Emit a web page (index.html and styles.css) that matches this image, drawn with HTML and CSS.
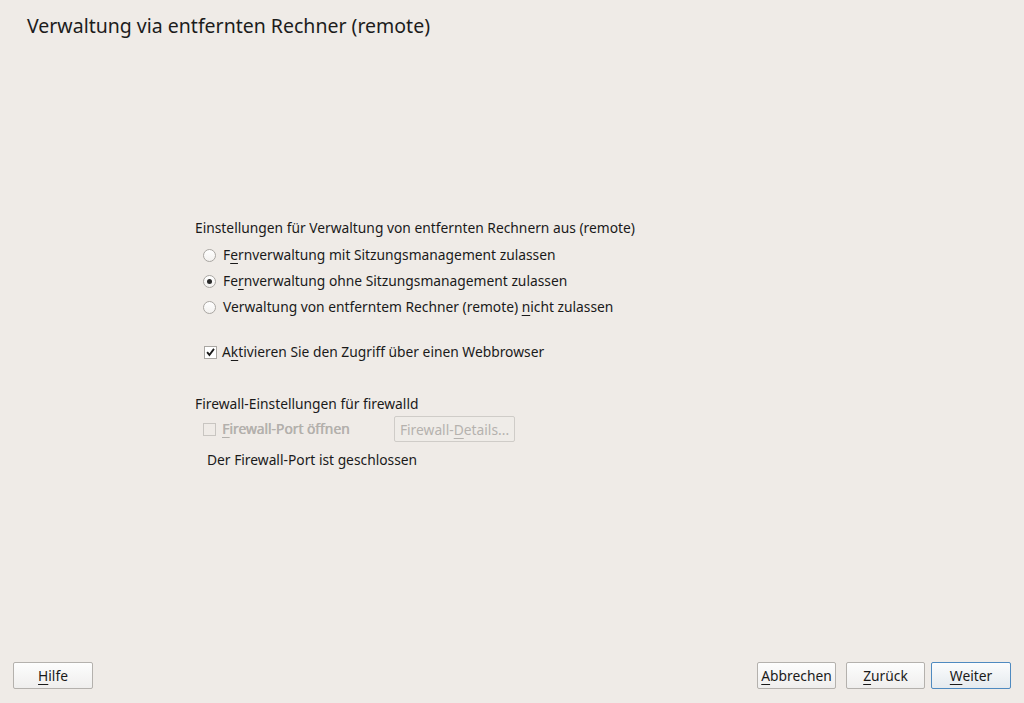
FILE: index.html
```html
<!DOCTYPE html>
<html lang="de">
<head>
<meta charset="utf-8">
<title>Verwaltung via entfernten Rechner (remote)</title>
<link rel="stylesheet" href="styles.css">
</head>
<body>
<div class="window">
  <h1 class="title">Verwaltung via entfernten Rechner (remote)</h1>
  <main class="content">
    <div class="panel">
      <div class="group-label">Einstellungen für Verwaltung von entfernten Rechnern aus (remote)</div>
      <div class="options">
        <label class="row"><span class="radio"></span><span>F<u>e</u>rnverwaltung mit Sitzungsmanagement zulassen</span></label>
        <label class="row"><span class="radio checked"></span><span>Fe<u>r</u>nverwaltung ohne Sitzungsmanagement zulassen</span></label>
        <label class="row"><span class="radio"></span><span>Verwaltung von entferntem Rechner (remote) <u>n</u>icht zulassen</span></label>
      </div>
      <label class="row check-row"><span class="check checked"><svg viewBox="0 0 12 12" width="12" height="12"><path d="M2.3 6.2 L4.8 9.2 L9.8 2.6" fill="none" stroke="#1a1a1a" stroke-width="2"/></svg></span><span>A<u>k</u>tivieren Sie den Zugriff über einen Webbrowser</span></label>
      <div class="group-label fw-label">Firewall-Einstellungen für firewalld</div>
      <div class="fw-row">
        <label class="row disabled"><span class="check"></span><span><u>F</u>irewall-Port öffnen</span></label>
        <button class="btn btn-disabled" disabled>Firewall-<u>D</u>etails...</button>
      </div>
      <div class="fw-status">Der Firewall-Port ist geschlossen</div>
    </div>
  </main>
  <footer class="footer">
    <button class="btn btn-help"><u>H</u>ilfe</button>
    <div class="nav">
      <button class="btn btn-nav"><u>A</u>bbrechen</button>
      <button class="btn btn-nav"><u>Z</u>urück</button>
      <button class="btn btn-nav btn-default"><u>W</u>eiter</button>
    </div>
  </footer>
</div>
</body>
</html>
```
FILE: styles.css
```css
* { box-sizing: border-box; }
html, body {
  margin: 0;
  padding: 0;
  height: 100%;
}
body {
  background: #efebe7;
  font-family: "Noto Sans", "DejaVu Sans", sans-serif;
  font-size: 13.8px;
  color: #1a1a1a;
}
u {
  text-decoration: underline;
  text-underline-offset: 3px;
  text-decoration-thickness: 1px;
}
.window {
  height: 703px;
  display: flex;
  flex-direction: column;
}
.title {
  margin: 0;
  padding: 13px 0 0 27px;
  font-size: 19.5px;
  font-weight: normal;
  line-height: 26px;
  color: #1c1c1c;
}
.content {
  flex: 1;
  padding: 179px 0 0 195px;
}
.panel {
  display: flex;
  flex-direction: column;
}
.group-label {
  line-height: 20px;
}
.options {
  display: flex;
  flex-direction: column;
  padding: 7px 0 0 8px;
  gap: 6px;
}
.row {
  display: flex;
  align-items: center;
  gap: 7px;
  line-height: 20px;
}
.radio {
  width: 13px;
  height: 13px;
  border-radius: 50%;
  border: 1px solid #a9a6a2;
  background: linear-gradient(#ffffff, #f3f1ef);
  position: relative;
  flex: none;
}
.radio.checked::after {
  content: "";
  position: absolute;
  left: 3px;
  top: 3px;
  width: 5px;
  height: 5px;
  border-radius: 50%;
  background: #2a2a2a;
}
.check {
  width: 13px;
  height: 13px;
  border: 1px solid #a9a6a2;
  background: #ffffff;
  display: flex;
  align-items: center;
  justify-content: center;
  flex: none;
}
.check svg { display: block; }
.check-row {
  padding: 25px 0 0 9px;
  gap: 5px;
}
.fw-label {
  margin-top: 32px;
}
.fw-row {
  display: flex;
  align-items: center;
  padding: 0 0 0 8px;
  margin-top: 2px;
}
.row.disabled {
  color: #b3b0ac;
  text-shadow: 0.5px 0 0 #b3b0ac;
  width: 191px;
  gap: 6px;
}
.row.disabled .check {
  background: transparent;
  border-color: #c8c5c1;
}
.fw-status {
  padding: 8px 0 0 12px;
  line-height: 20px;
}
.btn {
  font-family: inherit;
  font-size: 13.8px;
  color: #1a1a1a;
  height: 27px;
  padding: 0 3px;
  border: 1px solid #b4b1ad;
  border-radius: 2px;
  background: linear-gradient(#fdfdfd, #efeeed);
  white-space: nowrap;
}
.btn-disabled {
  color: #b5b2ae;
  border-color: #cfccc8;
  background: #efece8;
  height: 26px;
  width: 121px;
}
.btn-help { width: 80px; }
.btn-nav { width: 79px; }
.btn-default {
  width: 80px;
  border-color: #4f8ac0;
  background: linear-gradient(#fbfcfd, #e5eaee);
}
.footer {
  display: flex;
  justify-content: space-between;
  align-items: center;
  padding: 0 13px 14px 13px;
}
.nav {
  display: flex;
  gap: 10px;
}
.nav .btn-default { margin-left: -4px; }
```
